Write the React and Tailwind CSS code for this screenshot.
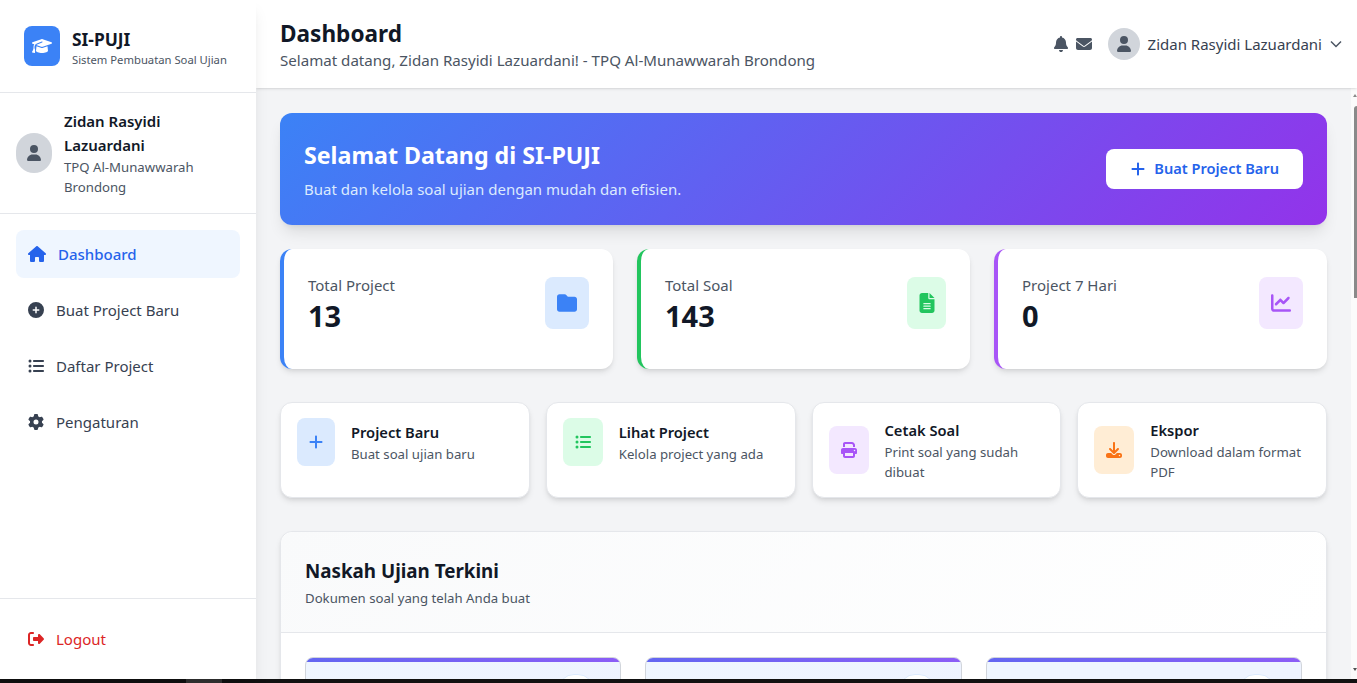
import { FaBell, FaChartLine, FaCirclePlus, FaDownload, FaEnvelope, FaFileLines, FaFolder, FaGear, FaGraduationCap, FaHouse, FaListUl, FaPlus, FaPrint, FaRightFromBracket, FaUser } from 'react-icons/fa6';

const navItems = [
  { label: 'Buat Project Baru', icon: FaCirclePlus },
  { label: 'Daftar Project', icon: FaListUl },
  { label: 'Pengaturan', icon: FaGear },
];

const stats = [
  { label: 'Total Project', value: '13', icon: FaFolder, border: 'border-[#3b82f6]', box: 'w-11 bg-[#dbeafe] text-[#3b82f6]' },
  { label: 'Total Soal', value: '143', icon: FaFileLines, border: 'border-[#22c55e]', box: 'w-[39px] bg-[#dcfce7] text-[#22c55e]' },
  { label: 'Project 7 Hari', value: '0', icon: FaChartLine, border: 'border-[#a855f7]', box: 'w-11 bg-[#f3e8ff] text-[#a855f7]' },
];

const actions = [
  { title: 'Project Baru', desc: 'Buat soal ujian baru', icon: FaPlus, box: 'w-[38px] bg-[#dbeafe] text-[#3b82f6]', align: 'items-start' },
  { title: 'Lihat Project', desc: 'Kelola project yang ada', icon: FaListUl, box: 'w-10 bg-[#dcfce7] text-[#22c55e]', align: 'items-start' },
  { title: 'Cetak Soal', desc: 'Print soal yang sudah dibuat', icon: FaPrint, box: 'w-10 bg-[#f3e8ff] text-[#a855f7]', align: 'items-center' },
  { title: 'Ekspor', desc: 'Download dalam format PDF', icon: FaDownload, box: 'w-10 bg-[#ffedd5] text-[#f97316]', align: 'items-center' },
];

function Avatar({ className }) {
  return (
    <div className={`flex shrink-0 items-center justify-center rounded-full bg-[#d1d5db] text-[#4b5563] ${className}`}>
      <FaUser className="text-[16px]" />
    </div>
  );
}

function Sidebar() {
  return (
    <aside className="z-20 flex w-64 shrink-0 flex-col bg-white shadow-lg">
      <div className="flex h-[93px] items-center border-b border-[#e5e7eb] px-6">
        <div className="mr-3 flex h-10 w-9 shrink-0 items-center justify-center rounded-lg bg-[#3b82f6] text-white">
          <FaGraduationCap className="text-[20px]" />
        </div>
        <div>
          <h1 className="h-7 text-[17.4px] leading-[30px] font-bold text-[#111827]">SI-PUJI</h1>
          <p className="text-[11.25px] leading-4 text-[#4b5563]">Sistem Pembuatan Soal Ujian</p>
        </div>
      </div>

      <div className="flex items-center border-b border-[#e5e7eb] p-4">
        <Avatar className="mr-3 h-10 w-9" />
        <div>
          <p className="text-[15px] leading-6 font-semibold text-[#111827]">Zidan Rasyidi Lazuardani</p>
          <p className="text-[13.2px] leading-5 text-[#4b5563]">TPQ Al-Munawwarah Brondong</p>
        </div>
      </div>

      <nav className="flex-1 space-y-2 p-4">
        <a className="flex h-12 items-center rounded-lg bg-[#eff6ff] px-3 text-[15px] font-medium text-[#2563eb]">
          <FaHouse className="mr-3 w-[18px] text-[18px]" />
          Dashboard
        </a>
        {navItems.map((item) => (
          <a key={item.label} className="flex h-12 items-center rounded-lg px-3 text-[15px] text-[#374151]">
            <item.icon className="mr-3 text-[16px]" />
            {item.label}
          </a>
        ))}
      </nav>

      <div className="border-t border-[#e5e7eb] p-4">
        <a className="flex h-12 items-center rounded-lg px-3 text-[15px] text-[#dc2626]">
          <FaRightFromBracket className="mr-3 text-[16px]" />
          Logout
        </a>
      </div>
    </aside>
  );
}

function Header() {
  return (
    <header className="z-10 flex h-[88px] shrink-0 items-center justify-between bg-white pr-[15px] pl-6 shadow-sm">
      <div>
        <h2 className="h-8 text-[22.6px] leading-[36px] font-bold text-[#111827]">Dashboard</h2>
        <p className="text-[15.1px] leading-6 text-[#4b5563]">Selamat datang, Zidan Rasyidi Lazuardani! - TPQ Al-Munawwarah Brondong</p>
      </div>
      <div className="flex items-center text-[#4b5563]">
        <FaBell className="mr-2 w-[14px] text-[16px]" />
        <FaEnvelope className="mr-4 text-[16px]" />
        <Avatar className="mr-2 h-8 w-8" />
        <span className="text-[15px] text-[#374151]">Zidan Rasyidi Lazuardani</span>
        <svg viewBox="0 0 12 12" className="ml-2 h-3 w-3" fill="none" stroke="currentColor" strokeWidth="1.5">
          <path d="M1 3.5l5 5 5-5" />
        </svg>
      </div>
    </header>
  );
}

function StatCard({ item }) {
  return (
    <div className={`flex justify-between rounded-xl border-l-4 bg-white px-6 pt-6 pb-9 shadow-md ${item.border}`}>
      <div>
        <p className="text-[15px] leading-6 text-[#4b5563]">{item.label}</p>
        <p className="mt-[2px] text-[29px] leading-[34px] font-bold text-[#111827]">{item.value}</p>
      </div>
      <div className={`mt-1 flex h-[52px] items-center justify-center rounded-lg ${item.box}`}>
        <item.icon className="text-[20px]" />
      </div>
    </div>
  );
}

function ActionCard({ item }) {
  return (
    <div className={`flex rounded-xl border border-[#e5e7eb] bg-white px-4 py-[15px] shadow-md ${item.align}`}>
      <div className={`mr-4 flex h-12 shrink-0 items-center justify-center rounded-lg ${item.box}`}>
        <item.icon className="text-[16px]" />
      </div>
      <div className={item.align === 'items-start' ? 'pt-0.5' : ''}>
        <h3 className="text-[14.7px] leading-6 font-semibold text-[#111827]">{item.title}</h3>
        <p className="text-[13.2px] leading-5 text-[#4b5563]">{item.desc}</p>
      </div>
    </div>
  );
}

function DocCard() {
  return (
    <div className="h-40 overflow-hidden rounded-lg border border-[#d1d5db] bg-[linear-gradient(135deg,#eff6ff,#eef2ff)]">
      <div className="h-1 bg-[linear-gradient(90deg,#6366f1,#8b5cf6)]" />
      <div className="flex justify-end pt-3 pr-[26px]">
        <div className="h-8 w-9 rounded-full border border-[#dbeafe] bg-white" />
      </div>
    </div>
  );
}

function Scrollbar() {
  return (
    <div className="flex w-[6px] shrink-0 flex-col items-end bg-[#fbfbfb]">
      <div className="mt-[6px] h-0 w-0 border-x-[2px] border-b-[3px] border-x-transparent border-b-[#8a8a8a]" />
      <div className="mt-[9px] h-[192px] w-[3px] rounded-tl-sm bg-[#8a8a8a]" />
      <div className="mt-auto mb-[8px] h-0 w-0 border-x-[2px] border-t-[3px] border-x-transparent border-t-[#505050]" />
    </div>
  );
}

export default function App() {
  return (
    <div className="flex h-[683px] flex-col overflow-hidden bg-[#f3f4f6] font-['Noto_Sans',sans-serif]">
      <div className="flex min-h-0 flex-1">
        <Sidebar />
        <div className="flex min-w-0 flex-1 flex-col">
          <Header />
          <div className="flex min-h-0 flex-1">
            <main className="min-w-0 flex-1 overflow-hidden px-6 pt-[25px]">
              <section className="flex items-center justify-between rounded-xl bg-[linear-gradient(135deg,#3b82f6,#9333ea)] p-6 text-white shadow-lg">
                <div>
                  <h2 className="mb-2 h-8 text-[23.2px] leading-[36px] font-bold">Selamat Datang di SI-PUJI</h2>
                  <p className="text-[15px] leading-6 text-[#dbeafe]">Buat dan kelola soal ujian dengan mudah dan efisien.</p>
                </div>
                <button className="flex h-10 items-center rounded-lg bg-white px-6 text-[14.6px] font-semibold text-[#2563eb]">
                  <FaPlus className="mr-2 text-[16px]" />
                  Buat Project Baru
                </button>
              </section>

              <div className="mt-6 grid grid-cols-3 gap-6">
                {stats.map((item) => <StatCard key={item.label} item={item} />)}
              </div>

              <div className="mt-[33px] grid grid-cols-4 gap-4">
                {actions.map((item) => <ActionCard key={item.title} item={item} />)}
              </div>

              <section className="mt-[33px] rounded-xl border border-[#e5e7eb] bg-white shadow-md">
                <div className="rounded-t-xl border-b border-[#e5e7eb] bg-[linear-gradient(135deg,#f9fafb,#ffffff)] px-6 pt-6 pb-6">
                  <h2 className="text-[18.8px] leading-[30px] font-bold text-[#111827]">Naskah Ujian Terkini</h2>
                  <p className="mt-[2px] text-[13.2px] leading-5 text-[#4b5563]">Dokumen soal yang telah Anda buat</p>
                </div>
                <div className="grid grid-cols-3 gap-6 p-6">
                  <DocCard />
                  <DocCard />
                  <DocCard />
                </div>
              </section>
            </main>
            <Scrollbar />
          </div>
        </div>
      </div>
      <div className="flex h-1 shrink-0 bg-[#111111]">
        <div className="ml-[186px] w-9 bg-[#333333]" />
      </div>
    </div>
  );
}
